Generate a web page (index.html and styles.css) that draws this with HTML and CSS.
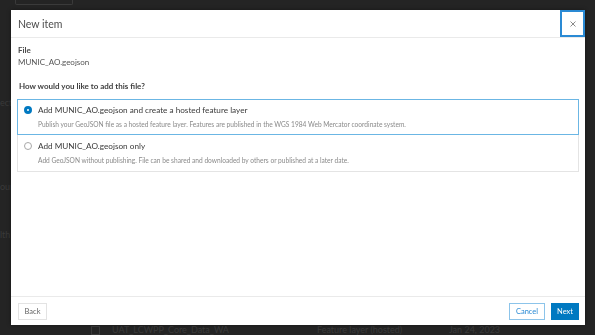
FILE: index.html
```html
<!DOCTYPE html>
<html lang="en">
<head>
    <meta charset="UTF-8">
    <title>New item</title>
    <link rel="stylesheet" href="styles.css">
</head>
<body>
    <div class="backdrop">
        <div class="bg-top"><span class="bg-btn"></span></div>
        <div class="bg-side">
            <span class="bg-label l1">ects</span>
            <span class="bg-label l2">ours</span>
            <span class="bg-label l3">lth</span>
        </div>
        <div class="bg-row">
            <span class="bg-check"></span>
            <span class="bg-name">UAT_LCWPP_Core_Data_WA</span>
            <span class="bg-type">Feature layer (hosted)</span>
            <span class="bg-date">Jan 24, 2023</span>
        </div>
    </div>

    <div class="modal">
        <div class="modal-header">
            <h1 class="modal-title">New item</h1>
            <button class="close-btn" aria-label="Close">
                <svg width="6" height="6" viewBox="0 0 6 6"><path d="M0.5 0.5 L5.5 5.5 M5.5 0.5 L0.5 5.5" stroke="#8a8a8a" stroke-width="1"/></svg>
            </button>
        </div>
        <div class="modal-body">
            <div class="file-label">File</div>
            <div class="file-name">MUNIC_AO.geojson</div>
            <div class="question">How would you like to add this file?</div>
            <div class="options">
                <label class="option selected">
                    <span class="radio checked"></span>
                    <span class="option-text">
                        <span class="option-title">Add MUNIC_AO.geojson and create a hosted feature layer</span>
                        <span class="option-desc">Publish your GeoJSON file as a hosted feature layer. Features are published in the WGS 1984 Web Mercator coordinate system.</span>
                    </span>
                </label>
                <label class="option">
                    <span class="radio"></span>
                    <span class="option-text">
                        <span class="option-title">Add MUNIC_AO.geojson only</span>
                        <span class="option-desc">Add GeoJSON without publishing. File can be shared and downloaded by others or published at a later date.</span>
                    </span>
                </label>
            </div>
        </div>
        <div class="modal-footer">
            <button class="btn btn-back">Back</button>
            <div class="footer-right">
                <button class="btn btn-cancel">Cancel</button>
                <button class="btn btn-next">Next</button>
            </div>
        </div>
    </div>
</body>
</html>
```

FILE: styles.css
```css
body {
    margin: 0;
    width: 595px;
    height: 335px;
    overflow: hidden;
    background: #242424;
    font-family: Lato, "Open Sans", sans-serif;
    color: #4a4a4a;
}
.backdrop {
    height: 335px;
    display: flex;
    flex-direction: column;
    color: #3a3a3a;
    font-size: 9px;
}
.bg-top {
    height: 10px;
    padding-left: 15px;
}
.bg-btn {
    display: block;
    width: 56px;
    height: 4px;
    border: 1px solid #3a3a3a;
    border-top: none;
    border-radius: 0 0 2px 2px;
}
.bg-side {
    flex: 1;
    position: relative;
}
.bg-label {
    position: absolute;
    left: 0;
}
.l1 { top: 87px; }
.l2 { top: 171px; }
.l3 { top: 219px; }
.bg-row {
    height: 10px;
    display: flex;
    align-items: flex-start;
    line-height: 10px;
}
.bg-check {
    width: 7px;
    height: 7px;
    border: 1px solid #3a3a3a;
    margin: 1px 12px 0 91px;
}
.bg-name { width: 205px; }
.bg-type { width: 132px; }
.bg-date { width: 120px; }

.modal {
    position: fixed;
    left: 11px;
    top: 10px;
    width: 574px;
    height: 315px;
    background: #fff;
    display: flex;
    flex-direction: column;
    box-shadow: 0 0 4px rgba(0, 0, 0, 0.4);
}
.modal-header {
    height: 27px;
    display: flex;
    align-items: center;
    justify-content: space-between;
    border-bottom: 1px solid #eaeaea;
}
.modal-title {
    margin: 0 0 0 7px;
    font-size: 10.5px;
    font-weight: normal;
    color: #4c4c4c;
}
.close-btn {
    width: 25px;
    height: 27px;
    padding: 0;
    background: #fff;
    border: 2px solid #2a8ad4;
    display: flex;
    align-items: center;
    justify-content: center;
    align-self: flex-start;
}
.modal-body {
    flex: 1;
    padding: 6px 6px 0 7px;
}
.file-label {
    font-size: 8px;
    font-weight: bold;
    color: #4a4a4a;
    line-height: 12px;
}
.file-name {
    font-size: 8px;
    color: #555;
    line-height: 13px;
}
.question {
    margin: 11px 0 0 1px;
    font-size: 8px;
    font-weight: bold;
    color: #3f3f3f;
    line-height: 12px;
}
.options {
    margin: 7px 0 0 -1px;
    display: flex;
    flex-direction: column;
}
.option {
    display: flex;
    align-items: flex-start;
    border: 1px solid #e4e4e4;
    height: 36px;
    box-sizing: border-box;
    padding: 5px 0 0 6px;
}
.option + .option {
    border-top: none;
    height: 37px;
    padding-top: 6px;
}
.option.selected {
    border: 1px solid #6bb6e4;
}
.radio {
    width: 6px;
    height: 6px;
    border: 1px solid #a8a8a8;
    border-radius: 50%;
    margin: 1px 6px 0 0;
    flex-shrink: 0;
}
.radio.checked {
    border: 3px solid #0079c1;
    width: 2px;
    height: 2px;
    background: #fff;
}
.option-text {
    display: flex;
    flex-direction: column;
}
.option-title {
    font-size: 8.2px;
    color: #3a3a3a;
    line-height: 11px;
}
.option-desc {
    margin-top: 4px;
    font-size: 6.6px;
    color: #8a8a8a;
    line-height: 9px;
}
.modal-footer {
    height: 28px;
    border-top: 1px solid #eaeaea;
    display: flex;
    align-items: center;
    justify-content: space-between;
    padding: 0 6px 0 7px;
}
.footer-right {
    display: flex;
    gap: 6px;
}
.btn {
    height: 17px;
    font-family: inherit;
    font-size: 7.5px;
    padding: 0;
    border-radius: 0;
    cursor: pointer;
}
.btn-back {
    background: #fff;
    border: 1px solid #e3e3e3;
    color: #666;
    width: 29px;
}
.btn-cancel {
    background: #fff;
    border: 1px solid #8cc4ea;
    color: #2a8ad4;
    width: 36px;
}
.btn-next {
    background: #0079c1;
    border: 1px solid #0079c1;
    color: #fff;
    width: 28px;
}
```
